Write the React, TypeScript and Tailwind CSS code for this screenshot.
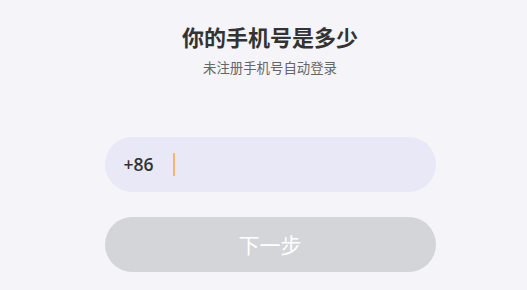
export default function App() {
  return (
    <div
      className="min-h-screen w-full bg-[#f4f4f9] flex flex-col items-center pl-[13px]"
      style={{ fontFamily: '"Noto Sans CJK SC", "Noto Sans", sans-serif' }}
    >
      <h1 className="mt-[21px] text-[22px] leading-[30px] font-bold text-[#333333]">
        你的手机号是多少
      </h1>
      <p className="mt-[6px] text-[13.4px] leading-[20px] text-[#666666]">
        未注册手机号自动登录
      </p>

      <div className="mt-[60px] w-[331px] h-[55px] rounded-full bg-[#e8e8f6] flex items-center pl-[19px]">
        <span className="text-[17.5px] font-semibold text-[#333333] font-['Open_Sans',sans-serif]">
          +86
        </span>
        <span className="ml-[19px] w-[2px] h-[23px] bg-[#f2b864]" />
      </div>

      <button className="mt-[25px] w-[331px] h-[55px] rounded-full bg-[#d3d5d8] text-white text-[21px] flex items-center justify-center">
        下一步
      </button>
    </div>
  )
}
